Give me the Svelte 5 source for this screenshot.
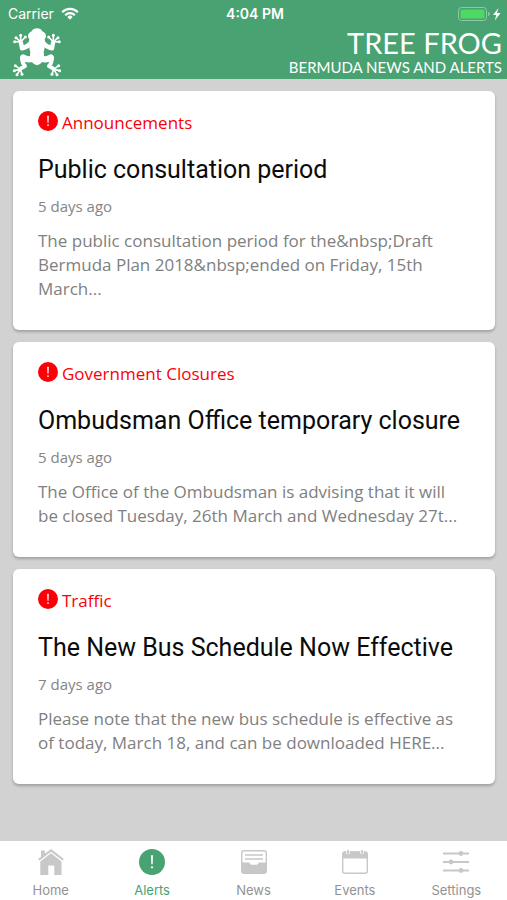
<script>
  const alerts = [
    {
      category: 'Announcements',
      title: 'Public consultation period',
      age: '5 days ago',
      body: 'The public consultation period for the&nbsp;Draft Bermuda Plan 2018&nbsp;ended on Friday, 15th March...'
    },
    {
      category: 'Government Closures',
      title: 'Ombudsman Office temporary closure',
      age: '5 days ago',
      body: 'The Office of the Ombudsman is advising that it will be closed Tuesday, 26th March and Wednesday 27t...'
    },
    {
      category: 'Traffic',
      title: 'The New Bus Schedule Now Effective',
      age: '7 days ago',
      body: 'Please note that the new bus schedule is effective as of today, March 18, and can be downloaded HERE...'
    }
  ];
  const tabs = ['Home', 'Alerts', 'News', 'Events', 'Settings'];
  let active = $state('Alerts');
</script>

{#snippet alertMark()}
  <circle cx="13" cy="13" r="13" fill="currentColor" />
  <path d="M12 6.2h2l-.3 9h-1.4z" fill="#fff" />
  <circle cx="13" cy="18.3" r="1.1" fill="#fff" />
{/snippet}

<div class="app">
  <header>
    <div class="status">
      <span class="carrier">
        Carrier
        <svg width="18" height="13" viewBox="0 0 18 13" fill="none" stroke="#fff" stroke-width="2.2" aria-hidden="true">
          <path d="M1.2 5.2a11 11 0 0 1 15.6 0M4.2 8.2a6.8 6.8 0 0 1 9.6 0" />
          <path d="M6.4 9.9a3.7 3.7 0 0 1 5.2 0L9 12.7z" fill="#fff" stroke="none" />
        </svg>
      </span>
      <span class="time">4:04 PM</span>
      <svg class="battery" width="45" height="16" viewBox="0 0 45 16" aria-hidden="true">
        <rect x="1.5" y="1.5" width="28" height="13" rx="3" fill="none" stroke="#8fc7a8" />
        <rect x="3.5" y="3.5" width="24" height="9" rx="1.5" fill="#4cd964" />
        <path d="M31 5.8q1.8.6 1.8 2.2T31 10.2z" fill="#8fc7a8" />
        <path d="M41.5 2 36 9h3.3l-1.5 5.5L43.6 7H40z" fill="#fff" />
      </svg>
    </div>
    <div class="brand">
      <svg width="50" height="50" viewBox="36 80 150 150" aria-hidden="true">
        <g fill="#fff">
          <path d="M95 93Q99 84 111 84T127 93Q138 98 138 107Q138 113 134 116Q138 128 134 143Q130 154 132 164Q130 192 111 195Q92 192 90 164Q92 154 88 143Q84 128 88 116Q84 113 84 107Q84 98 95 93Z" />
        </g>
        <g fill="none" stroke="#fff" stroke-linecap="round" stroke-linejoin="round">
          <path stroke-width="13" d="M94 126Q84 139 66 144L63 128M128 126Q138 139 156 144L159 128" />
          <path stroke-width="19" d="M98 175Q82 180 70 172M124 175Q140 180 152 172" />
          <path stroke-width="12" d="M67 169Q65 187 75 197L62 205M155 169Q157 187 147 197L160 205" />
          <path stroke-width="5" d="M62 125 44 124M62 125 48 112M62 125 62 105M62 125 76 110M160 125 178 124M160 125 174 112M160 125 160 105M160 125 146 110M61 207 46 196M61 207 43 211M61 207 51 223M61 207 66 222M161 207 176 196M161 207 179 211M161 207 171 223M161 207 156 222" />
        </g>
        <g fill="#fff">
          {#each [[44, 124], [48, 112], [62, 105], [76, 110], [46, 196], [43, 211], [51, 223], [66, 222]] as [x, y]}
            <circle cx={x} cy={y} r="4.5" />
            <circle cx={222 - x} cy={y} r="4.5" />
          {/each}
        </g>
      </svg>
      <div class="wordmark">
        <h1>TREE FROG</h1>
        <p>BERMUDA NEWS AND ALERTS</p>
      </div>
    </div>
  </header>

  <main>
    {#each alerts as item}
      <article>
        <p class="category">
          <svg width="20" height="20" viewBox="0 0 26 26" aria-hidden="true">{@render alertMark()}</svg>
          {item.category}
        </p>
        <h2>{item.title}</h2>
        <p class="age">{item.age}</p>
        <p class="body">{item.body}</p>
      </article>
    {/each}
  </main>

  <nav>
    {#each tabs as tab}
      <button class:active={active === tab} onclick={() => (active = tab)}>
        <svg width="28" height="28" viewBox="0 0 28 28" aria-hidden="true">
          {#if tab === 'Home'}
            <path fill="currentColor" d="M4 2.5h3.8v3.2L14 1l12.8 10-1.3 1.6L14 3.7 2.5 12.6 1.2 11 4 8.7zM14 5.3l10.5 8.2V27h-7.2v-9.6h-6V27h-8V13.5z" />
          {:else if tab === 'Alerts'}
            <g transform="translate(1 1)">{@render alertMark()}</g>
          {:else if tab === 'News'}
            <path fill="none" stroke="currentColor" stroke-width="1.4" d="M4 2.7h20q2.3 0 2.3 2.3v18q0 2.3-2.3 2.3H4q-2.3 0-2.3-2.3V5q0-2.3 2.3-2.3zM5 7h18M5 11h18" />
            <path fill="currentColor" d="M2 14.5h7l2 2.2h6l2-2.2h7V25H2z" />
          {:else if tab === 'Events'}
            <rect x="1.7" y="4" width="24.6" height="21.3" rx="2.3" fill="none" stroke="currentColor" stroke-width="1.4" />
            <path fill="currentColor" d="M1.5 10.5v-5Q1.5 3.4 4 3.4h20q2.5 0 2.5 2.1v5z" />
            <path d="M7 3.2v1.2M21 3.2v1.2" stroke="#fff" stroke-width="3.8" stroke-linecap="round" />
            <path d="M7 3.2v1.6M21 3.2v1.6" stroke="currentColor" stroke-width="2.2" stroke-linecap="round" />
          {:else}
            <path d="M1 5.5h26M1 14h26M1 22.5h26" stroke="currentColor" stroke-width="1.8" />
            <g fill="currentColor">
              <circle cx="19" cy="5.5" r="2.4" /><circle cx="9" cy="14" r="2.4" /><circle cx="19" cy="22.5" r="2.4" />
            </g>
          {/if}
        </svg>
        <span>{tab}</span>
      </button>
    {/each}
  </nav>
</div>

<style>
  :global(body) {
    margin: 0;
  }
  .app {
    min-height: 100vh;
    display: flex;
    flex-direction: column;
    background: #d2d2d2;
    font-family: 'Open Sans', sans-serif;
  }
  h1,
  h2,
  p {
    margin: 0;
    font-weight: 400;
  }
  svg {
    display: block;
    flex: none;
  }
  header {
    background: #49a271;
    color: #fff;
    padding-bottom: 2px;
  }
  .status {
    display: grid;
    grid-template-columns: 1fr auto 1fr;
    align-items: center;
    height: 27px;
    padding: 0 5px 0 8px;
    font: 14px/20px Inter, sans-serif;
  }
  .carrier {
    display: flex;
    align-items: center;
    gap: 7px;
  }
  .time {
    font-weight: 600;
  }
  .battery {
    justify-self: end;
  }
  .brand {
    display: flex;
    justify-content: space-between;
    padding: 0 5px 0 12px;
  }
  .wordmark {
    text-align: right;
    font-family: Lato, sans-serif;
  }
  h1 {
    font-size: 29px;
    line-height: 32px;
  }
  .wordmark p {
    font-size: 15px;
    line-height: 16px;
  }
  main {
    flex: 1;
    display: flex;
    flex-direction: column;
    gap: 12px;
    padding: 12px 12px 24px 13px;
  }
  article {
    padding: 20px 28px 29px 25px;
    background: #fff;
    border-radius: 6px;
    box-shadow: 0 2px 3px rgba(0, 0, 0, 0.24);
  }
  .category {
    display: flex;
    gap: 4px;
    color: #fb0007;
    font-size: 17px;
    line-height: 24px;
  }
  h2 {
    margin-top: 19px;
    color: #0b0b0b;
    font: 25px/32px Roboto, sans-serif;
  }
  .age {
    margin-top: 10px;
    color: #858585;
    font-size: 15px;
    line-height: 20px;
  }
  .body {
    margin-top: 13px;
    color: #808080;
    font-size: 17px;
    line-height: 24px;
  }
  nav {
    position: sticky;
    bottom: 0;
    display: flex;
    background: #fff;
    padding: 7px 0 2px;
  }
  button {
    flex: 1;
    display: flex;
    flex-direction: column;
    align-items: center;
    gap: 6px;
    padding: 0;
    border: 0;
    background: none;
    color: #c8c8c8;
    font: 13px/16px Inter, sans-serif;
    cursor: pointer;
  }
  button span {
    color: #929292;
  }
  .active,
  .active span {
    color: #49a271;
  }
</style>
